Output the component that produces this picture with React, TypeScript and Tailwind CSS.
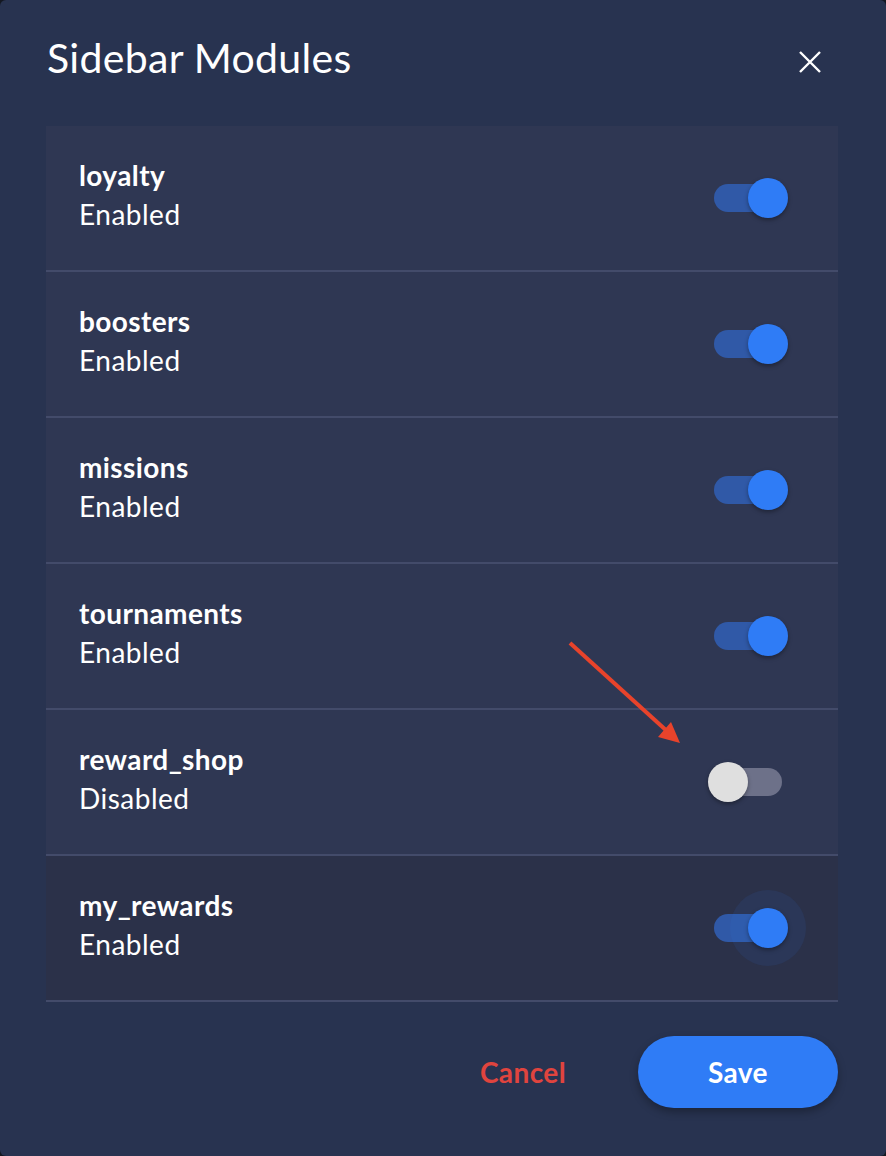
import { useState } from 'react';

const initialModules = [
  { key: 'loyalty', enabled: true },
  { key: 'boosters', enabled: true },
  { key: 'missions', enabled: true },
  { key: 'tournaments', enabled: true },
  { key: 'reward_shop', enabled: false },
  { key: 'my_rewards', enabled: true },
];

function Toggle({ checked, focused, onChange }: { checked: boolean; focused?: boolean; onChange: () => void }) {
  return (
    <button
      type="button"
      onClick={onChange}
      className={`relative h-[28px] w-[68px] rounded-full ${checked ? 'bg-[#3059a7]' : 'bg-[#6d7189]'}`}
    >
      {focused && (
        <span className="absolute top-1/2 left-[16px] h-[76px] w-[76px] -translate-y-1/2 rounded-full bg-[#2f7cf6]/[0.09]" />
      )}
      <span
        className={`absolute top-1/2 h-[40px] w-[40px] -translate-y-1/2 rounded-full shadow-[0_2px_4px_rgba(0,0,0,0.35)] ${
          checked ? 'left-[34px] bg-[#2f7cf6]' : 'left-[-6px] bg-[#dfdfdf]'
        }`}
      />
    </button>
  );
}

export default function App() {
  const [modules, setModules] = useState(initialModules);

  const toggle = (key: string) => {
    setModules((prev) => prev.map((m) => (m.key === key ? { ...m, enabled: !m.enabled } : m)));
  };

  return (
    <div className="min-h-screen bg-[#141821]" style={{ fontFamily: 'Lato, "Open Sans", sans-serif' }}>
      <div className="relative flex h-[1156px] w-[886px] flex-col rounded-[6px] bg-[#283350] text-white">
        <div className="flex h-[126px] items-start justify-between pl-[47px] pr-[64px]">
          <h2 className="mt-[32px] text-[41px] leading-[52px] font-normal tracking-[0.3px]">Sidebar Modules</h2>
          <button type="button" className="mt-[50px] text-white">
            <svg width="24" height="24" viewBox="0 0 24 24" fill="none" stroke="currentColor" strokeWidth="2.4">
              <path d="M2 2L22 22M22 2L2 22" />
            </svg>
          </button>
        </div>

        <div className="ml-[46px] flex w-[792px] flex-col">
          {modules.map((m, i) => (
            <div
              key={m.key}
              className={`flex h-[146px] items-center justify-between border-b-2 border-[#434b6a] pl-[33px] pr-[56px] ${
                i === modules.length - 1 ? 'bg-[#2b3149]' : 'bg-[#2f3753]'
              }`}
            >
              <div className="-mt-[6px] flex flex-col">
                <span className="text-[28px] leading-[38px] font-bold tracking-[0.4px]">{m.key}</span>
                <span className="text-[28px] leading-[40px] font-normal tracking-[0.5px]">
                  {m.enabled ? 'Enabled' : 'Disabled'}
                </span>
              </div>
              <Toggle checked={m.enabled} focused={i === modules.length - 1} onChange={() => toggle(m.key)} />
            </div>
          ))}
        </div>

        <div className="mt-[34px] flex items-center justify-end gap-[42px] pr-[48px]">
          <button type="button" className="px-[30px] text-[28px] font-bold tracking-[0.4px] text-[#e0443e]">
            Cancel
          </button>
          <button
            type="button"
            className="h-[72px] w-[200px] rounded-full bg-[#2f7cf6] text-[28px] font-bold tracking-[0.4px] text-white shadow-[0_4px_8px_rgba(0,0,0,0.3)]"
          >
            Save
          </button>
        </div>

        <svg
          className="pointer-events-none absolute inset-0"
          width="886"
          height="1156"
          viewBox="0 0 886 1156"
        >
          <line x1="570" y1="643" x2="668" y2="732" stroke="#e8432b" strokeWidth="4" />
          <polygon points="680,743 658,737 671,722" fill="#e8432b" />
        </svg>
      </div>
    </div>
  );
}
